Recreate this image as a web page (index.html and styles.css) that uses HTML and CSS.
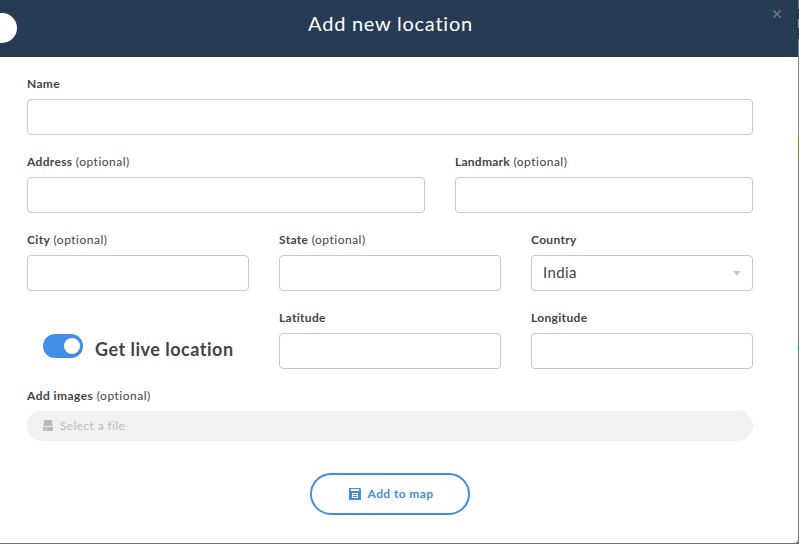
FILE: index.html
```html
<!DOCTYPE html>
<html lang="en">
<head>
<meta charset="utf-8">
<title>Add new location</title>
<link rel="stylesheet" href="styles.css">
</head>
<body>
<div class="modal">
  <header class="modal-header">
    <span class="back"></span>
    <h1 class="title">Add new location</h1>
    <svg class="close" viewBox="0 0 8 8"><path d="M.5.5l7 7M7.5.5l-7 7"/></svg>
  </header>
  <form class="form">
    <div class="row">
      <div class="field full"><label class="label"><b>Name</b></label><div class="input"></div></div>
    </div>
    <div class="row">
      <div class="field wide"><label class="label"><b>Address</b> <span>(optional)</span></label><div class="input"></div></div>
      <div class="field full"><label class="label"><b class="landmark">Landmark</b> <span>(optional)</span></label><div class="input"></div></div>
    </div>
    <div class="row">
      <div class="field full"><label class="label"><b>City</b> <span>(optional)</span></label><div class="input"></div></div>
      <div class="field full"><label class="label"><b>State</b> <span>(optional)</span></label><div class="input"></div></div>
      <div class="field full"><label class="label"><b>Country</b></label>
        <div class="input select"><span>India</span><svg class="caret" viewBox="0 0 8 5"><path d="M0 0h8L4 5z"/></svg></div></div>
    </div>
    <div class="row">
      <div class="live"><span class="switch"><i class="knob"></i></span><span class="live-text">Get live location</span></div>
      <div class="field full"><label class="label"><b>Latitude</b></label><div class="input"></div></div>
      <div class="field full"><label class="label"><b>Longitude</b></label><div class="input"></div></div>
    </div>
    <div class="images">
      <label class="label"><b class="images-label">Add images</b> <span>(optional)</span></label>
      <div class="file">
        <svg class="drive" viewBox="0 0 10 11"><path d="M2 0h6a1 1 0 0 1 1 .8L9.7 6H.3L1 .8A1 1 0 0 1 2 0z"/><path fill-rule="evenodd" d="M0 7h10v3a1 1 0 0 1-1 1H1a1 1 0 0 1-1-1zM2 8.2v1.3h1.3V8.2z"/></svg>
        <span class="file-text">Select a file</span>
      </div>
    </div>
    <button class="submit" type="button">
      <svg class="save" viewBox="0 0 12 12"><path fill-rule="evenodd" d="M0 0h11l1 1v11H0zM2 1v2h8V1zM3 5v5h6V5z"/><path d="M4 6h4v1H4zM4 8h4v1H4z"/></svg>
      <span class="submit-text">Add to map</span>
    </button>
  </form>
</div>
</body>
</html>
```
FILE: styles.css
```css
* { box-sizing: border-box; }
body { margin: 0; height: 544px; overflow: hidden; background: linear-gradient(#747474 0 9px, #333 9px 19px, #999 19px 28px, #333 28px 39px, #85857f 39px 138px, #8c7e28 138px 157px, #747474 157px 345px, #257ba2 345px 350px, #747474 350px); color: #444; font-family: Lato, "Liberation Sans", sans-serif; font-variant-ligatures: none; }
.modal { width: 798px; height: 543px; background: #fff; border-radius: 0 0 4px 0; overflow: hidden; }
.modal-header { position: relative; height: 57px; padding-right: 17px; background: #273c54; color: #fff; text-align: center; }
.back { position: absolute; left: -13px; top: 13px; width: 30px; height: 30px; border-radius: 50%; background: #fff; }
.title { margin: 0; font-size: 20px; line-height: 47px; font-weight: 400; letter-spacing: .75px; }
.close { position: absolute; left: 773px; top: 10px; width: 8px; height: 8px; fill: none; stroke: #777; stroke-width: 1.5; }
.form { display: flex; flex-direction: column; padding: 19px 45px 0 27px; }
.row { display: flex; gap: 30px; height: 78px; }
.field { display: flex; flex-direction: column; }
.full { flex: 1 1 0; }
.wide { flex: 0 0 398px; }
.label { display: block; height: 23px; font-size: 12px; line-height: 15px; letter-spacing: .33px; white-space: nowrap; }
.label span { letter-spacing: .5px; }
.landmark { letter-spacing: .26px; }
.images-label { letter-spacing: .45px; }
.input { height: 36px; border: 1px solid #c8c8c8; border-radius: 4px; }
.select { display: flex; align-items: center; justify-content: space-between; padding: 0 11px; font-size: 15px; line-height: 30px; letter-spacing: .4px; }
.select span { padding-bottom: 3px; }
.caret { width: 8px; height: 5px; fill: #c8c8c8; }
.live { display: flex; flex: 0 0 222px; gap: 12px; height: 24px; margin-top: 24px; padding-left: 16px; }
.switch { display: flex; flex: none; align-items: center; justify-content: flex-end; width: 40px; height: 24px; padding-right: 3px; border-radius: 12px; background: #428de5; }
.knob { width: 16px; height: 16px; border-radius: 50%; background: #fff; }
.live-text { font-size: 18px; line-height: 30px; font-weight: 700; letter-spacing: .5px; white-space: nowrap; }
.images { height: 85px; }
.file { display: flex; align-items: center; height: 30px; padding-left: 16px; gap: 7px; border-radius: 15px; background: #f1f1f1; color: #bbb; font-size: 12px; letter-spacing: .37px; }
.file-text { padding-bottom: 1px; }
.drive { width: 10px; height: 11px; margin-bottom: 1px; fill: #bbb; }
.submit { display: flex; align-items: center; justify-content: center; align-self: center; width: 160px; height: 42px; gap: 7px; padding: 0 0 0 2px; border: 2px solid #428de5; border-radius: 21px; background: #fff; color: #428de5; font: 700 12px Lato, sans-serif; letter-spacing: .4px; }
.submit-text { padding-bottom: 1px; }
.save { width: 12px; height: 12px; fill: #428de5; }
```
